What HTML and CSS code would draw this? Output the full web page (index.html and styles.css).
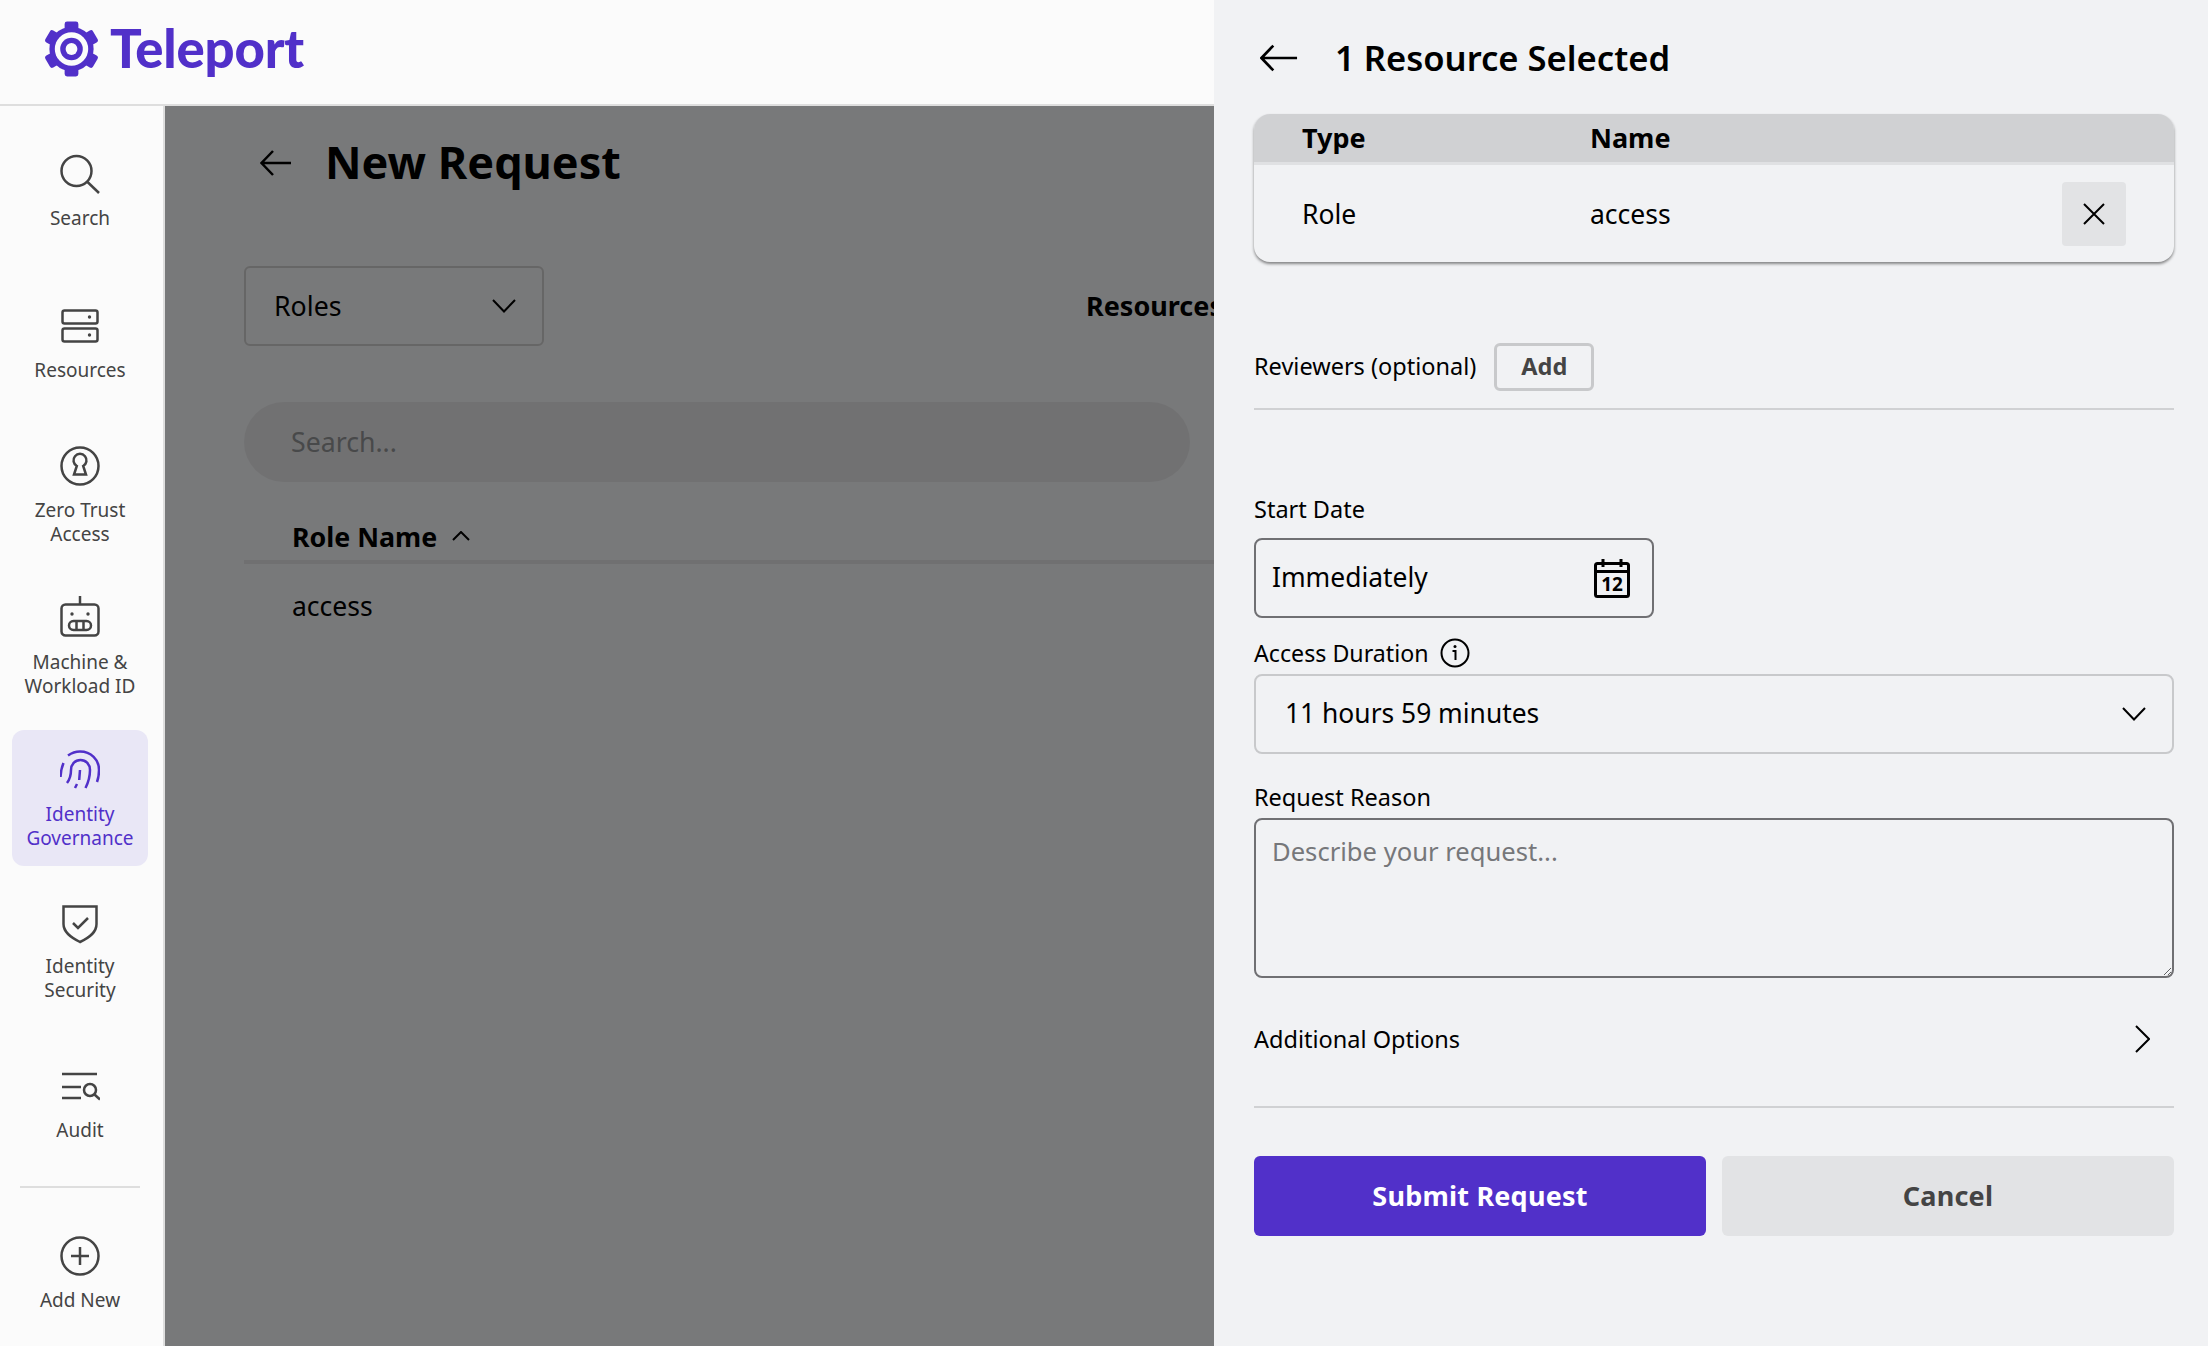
FILE: index.html
```html
<!DOCTYPE html>
<html lang="en">
<head>
<meta charset="utf-8">
<title>Teleport</title>
<link rel="stylesheet" href="styles.css">
</head>
<body>
<div class="app">
  <header class="topbar">
    <svg class="logo-mark" viewBox="0 0 56 56">
      <g class="logo-teeth">
        <rect x="21" y="0" width="14" height="14" rx="2.500"/>
        <rect x="21" y="0" width="14" height="14" rx="2.500" transform="rotate(60 28 28)"/>
        <rect x="21" y="0" width="14" height="14" rx="2.500" transform="rotate(120 28 28)"/>
        <rect x="21" y="0" width="14" height="14" rx="2.500" transform="rotate(180 28 28)"/>
        <rect x="21" y="0" width="14" height="14" rx="2.500" transform="rotate(240 28 28)"/>
        <rect x="21" y="0" width="14" height="14" rx="2.500" transform="rotate(300 28 28)"/>
        <circle cx="28" cy="28" r="22.500"/>
      </g>
      <circle class="logo-hole" cx="28" cy="28" r="17"/>
      <circle class="logo-ring" cx="28" cy="28" r="11.500"/>
      <circle class="logo-hole" cx="28" cy="28" r="6"/>
    </svg>
    <span class="logo-text">Teleport</span>
  </header>
  <div class="body-row">
    <nav class="sidebar">
      <a class="nav-item">
        <svg class="nav-icon" viewBox="0 0 40 40"><circle cx="16.500" cy="17" r="15"/><path d="M27.500 28 39 39"/></svg>
        <span>Search</span>
      </a>
      <a class="nav-item">
        <svg class="nav-icon" viewBox="0 0 40 40"><rect x="2.500" y="4.500" width="35" height="13" rx="2"/><rect x="2.500" y="22.500" width="35" height="13" rx="2"/><circle class="solid" cx="29.500" cy="11" r="1.700"/><circle class="solid" cx="29.500" cy="29" r="1.700"/></svg>
        <span>Resources</span>
      </a>
      <a class="nav-item">
        <svg class="nav-icon" viewBox="0 0 40 40"><circle cx="20" cy="20" r="18.500"/><path d="M14 28.500h12l-2.800-8.500a6.500 6.500 0 1 0-6.400 0z"/></svg>
        <span>Zero Trust<br>Access</span>
      </a>
      <a class="nav-item">
        <svg class="nav-icon icon-bleed" viewBox="0 2 40 40"><rect x="1.500" y="8.500" width="37" height="31" rx="4"/><path d="M20 0v8.500"/><circle class="solid" cx="12" cy="18" r="1.700"/><circle class="solid" cx="28" cy="18" r="1.700"/><rect x="9" y="25" width="22" height="9" rx="4.500"/><path d="M16.500 25v9M23.500 25v9"/></svg>
        <span>Machine &amp;<br>Workload ID</span>
      </a>
      <a class="nav-item active">
        <svg class="nav-icon" viewBox="0 0 40 40"><path d="M0.500 27c.3-5 1-9.500 3-14M8 5.500C11.500 3 15.500 1.500 20 1.500 31 1.500 39 9.500 39 20c0 4-.5 8-2 12"/><path d="M7 33c3-4 4-9 4-13 0-5.500 4-10 9.500-10s9.500 4.500 9.500 10c0 6-1.500 12-4.500 18"/><path d="M20 20l-.8 10M17 34l-2 4"/></svg>
        <span>Identity<br>Governance</span>
      </a>
      <a class="nav-item">
        <svg class="nav-icon icon-bleed" viewBox="0 0 40 40"><path d="M3.500 4.500h33V22c0 8-6 13-16.500 18C10 35 3.500 30 3.500 22z"/><path d="m13 21 5 5 10-10"/></svg>
        <span>Identity<br>Security</span>
      </a>
      <a class="nav-item">
        <svg class="nav-icon" viewBox="0 0 40 40"><path d="M2 8h35M2 21h19M2 32h19"/><circle cx="30" cy="24" r="6"/><path d="m34.500 28.500 5.500 5"/></svg>
        <span>Audit</span>
      </a>
      <div class="nav-divider"></div>
      <a class="nav-item">
        <svg class="nav-icon" viewBox="0 0 40 40"><circle cx="20" cy="20" r="18.500"/><path d="M20 11v18M11 20h18"/></svg>
        <span>Add New</span>
      </a>
    </nav>
    <main class="content">
      <div class="page-head">
        <svg class="back-small" viewBox="0 0 32 28"><path d="M31 14H2M13 2 1.500 14 13 26"/></svg>
        <h1>New Request</h1>
      </div>
      <div class="filter-row">
        <div class="kind-select"><span>Roles</span><svg class="chev" viewBox="0 0 24 14"><path d="M1 1l11 11.500L23 1"/></svg></div>
        <strong class="resources-label">Resources</strong>
      </div>
      <div class="search-pill">Search...</div>
      <div class="table-head"><strong>Role Name</strong><svg class="sort" viewBox="0 0 18 10"><path d="M1 9l8-8 8 8"/></svg></div>
      <div class="table-cell">access</div>
    </main>
  </div>
  <div class="scrim"></div>
  <aside class="panel">
    <div class="panel-head">
      <svg class="back-large" viewBox="0 0 40 30"><path d="M39 15H2M14 2 1.500 15 14 28"/></svg>
      <h2>1 Resource Selected</h2>
    </div>
    <div class="selected">
      <div class="selected-head"><span class="col-type">Type</span><span>Name</span></div>
      <div class="selected-row">
        <span class="col-type">Role</span><span class="col-name">access</span>
        <button class="remove"><svg viewBox="0 0 22 22"><path d="M1 1l20 20M21 1 1 21"/></svg></button>
      </div>
    </div>
    <div class="reviewers"><span>Reviewers (optional)</span><button class="add-btn">Add</button></div>
    <label class="field-label start-label">Start Date</label>
    <div class="date-box">
      <span>Immediately</span>
      <svg class="calendar" viewBox="0 0 36 39"><rect x="1.500" y="4.500" width="33" height="33" rx="2"/><path d="M1.500 12.500h33M9 0v8M27 0v8"/><text x="18" y="32" text-anchor="middle" class="cal-num">12</text></svg>
    </div>
    <label class="field-label duration-label">Access Duration
      <svg class="info" viewBox="0 0 30 30"><circle cx="15" cy="15" r="13.500"/><path d="M12.500 13H15.500V22"/><circle class="solid" cx="15" cy="8.500" r="1.500"/></svg>
    </label>
    <div class="duration-box"><span>11 hours 59 minutes</span><svg class="chev" viewBox="0 0 24 14"><path d="M1 1l11 11.500L23 1"/></svg></div>
    <label class="field-label reason-label">Request Reason</label>
    <textarea class="reason" placeholder="Describe your request..."></textarea>
    <div class="options"><span>Additional Options</span><svg class="chev-right" viewBox="0 0 16 28"><path d="M2 1l13 13L2 27"/></svg></div>
    <div class="actions">
      <button class="btn primary">Submit Request</button>
      <button class="btn secondary">Cancel</button>
    </div>
  </aside>
</div>
</body>
</html>
```

FILE: styles.css
```css
* { box-sizing: border-box; }
html, body { margin: 0; height: 100%; overflow: hidden; }
body { font-family: "Noto Sans", "Open Sans", sans-serif; color: #000; background: #f1f2f4; }
svg { fill: none; stroke: currentColor; flex: none; }
svg .solid { fill: currentColor; stroke: none; }
button { font-family: inherit; cursor: pointer; }

.app { position: relative; width: 2208px; height: 1346px; overflow: hidden; }

.topbar { height: 106px; background: #fbfbfb; border-bottom: 2px solid #dedede; display: flex; align-items: center; padding-left: 44px; gap: 11px; position: relative; z-index: 2; }
.logo-mark { width: 55px; height: 56px; stroke: none; margin-top: -6px; }
.logo-teeth { fill: #5130c9; stroke: none; }
.logo-hole { fill: #fbfbfb; stroke: none; }
.logo-ring { fill: #5130c9; stroke: none; }
.logo-text { font-family: "Lato", sans-serif; font-weight: 900; font-size: 52.700px; line-height: 60px; color: #5130c9; margin-top: -8px; letter-spacing: -0.2px; }

.body-row { display: flex; height: 1240px; }

.sidebar { width: 165px; flex: none; background: #fbfbfb; border-right: 2px solid #dedede; display: flex; flex-direction: column; align-items: flex-start; padding: 16px 0 0 12px; gap: 16px; position: relative; z-index: 2; }
.nav-item { width: 136px; height: 136px; flex: none; border-radius: 12px; padding-top: 4px; display: flex; flex-direction: column; align-items: center; justify-content: center; gap: 12px; color: #444; font-size: 19px; line-height: 24px; text-align: center; white-space: nowrap; }
.nav-icon { width: 40px; height: 40px; stroke-width: 2.500; }
.icon-bleed { overflow: visible; }
.nav-item.active { background: #e9e7f6; color: #5130c9; }
.nav-divider { width: 120px; height: 2px; flex: none; margin-left: 8px; background: #dedede; }

.content { flex: 1; min-width: 0; padding: 25px 0 0 79px; background: #f1f2f4; }
.page-head { display: flex; align-items: center; height: 64px; }
.back-small { width: 32px; height: 28px; margin-left: 16px; stroke-width: 2.500; }
h1 { margin: -2px 0 0 33px; font-size: 45px; line-height: 64px; font-weight: 700; }
.filter-row { display: flex; align-items: center; margin-top: 71px; }
.kind-select { width: 300px; height: 80px; border: 2px solid #ccc; border-radius: 6px; display: flex; align-items: center; justify-content: space-between; padding: 0 26px 0 28px; font-size: 26.700px; line-height: 76px; }
.kind-select span { margin-top: -1px; }
.chev { width: 24px; height: 14px; stroke-width: 2; }
.resources-label { margin: -2px 0 0 542px; font-size: 27px; white-space: nowrap; }
.search-pill { width: 946px; height: 80px; margin-top: 56px; border-radius: 40px; background: #e2e3e5; display: flex; align-items: center; padding: 0 0 2px 47px; font-size: 26.700px; color: #919294; }
.table-head { display: flex; align-items: center; gap: 15px; height: 52px; margin-top: 30px; padding-left: 48px; border-bottom: 4px solid #e0e1e3; font-size: 26.800px; }
.sort { width: 18px; height: 10px; stroke-width: 2; }
.table-cell { padding: 24px 0 0 48px; font-size: 26.500px; line-height: 36px; }

.scrim { position: absolute; left: 165px; top: 106px; right: 0; bottom: 0; background: rgba(0, 0, 0, .5); z-index: 3; }

.panel { position: absolute; top: 0; right: 0; width: 994px; height: 100%; background: #f1f2f4; padding: 0 34px 0 40px; display: flex; flex-direction: column; z-index: 4; }
.panel-head { height: 114px; padding-top: 2px; display: flex; align-items: center; flex: none; }
.back-large { width: 38px; height: 30px; margin-left: 6px; stroke-width: 2.800; }
h2 { margin: 0 0 0 37px; font-size: 34.600px; font-weight: 600; line-height: 48px; }

.selected { flex: none; height: 148px; border-radius: 16px; box-shadow: 0 2px 3px rgba(0, 0, 0, .45); overflow: hidden; font-size: 26.500px; }
.selected-head { height: 51px; padding-bottom: 1px; background: #d0d1d3; border-bottom: 3px solid #e0e1e3; display: flex; align-items: center; font-weight: 700; padding-left: 48px; font-size: 27px; }
.col-type { width: 288px; }
.selected-row { height: 97px; display: flex; align-items: center; padding: 0 48px; }
.col-name { flex: 1; }
.remove { width: 64px; height: 64px; border: 0; border-radius: 4px; background: #e2e3e5; display: flex; align-items: center; justify-content: center; padding: 0; }
.remove svg { width: 22px; height: 22px; stroke-width: 2; color: #000; }

.reviewers { flex: none; margin-top: 81px; padding-bottom: 17px; border-bottom: 2px solid #d0d1d3; display: flex; align-items: center; gap: 18px; font-size: 23.500px; }
.reviewers span { margin-top: -2px; }
.add-btn { width: 100px; height: 48px; border: 3px solid #c8c9cb; border-radius: 6px; background: transparent; color: #444; font-size: 23.500px; font-weight: 700; padding: 0 0 2px; }

.field-label { display: flex; align-items: center; height: 28px; font-size: 23.500px; flex: none; white-space: nowrap; }
.start-label { margin-top: 85px; }
.date-box { flex: none; margin-top: 15px; width: 400px; height: 80px; border: 2px solid #707073; border-radius: 8px; display: flex; align-items: center; justify-content: space-between; padding: 0 22px 2px 16px; font-size: 26.400px; }
.calendar { width: 36px; height: 39px; stroke-width: 3; color: #000; margin-top: 2px; }
.cal-num { font-size: 19px; font-weight: 700; fill: currentColor; stroke: none; }
.duration-label { margin-top: 21px; gap: 11px; font-size: 23.200px; }
.info { width: 30px; height: 30px; stroke-width: 2; }
.duration-box { flex: none; margin-top: 7px; height: 80px; border: 2px solid #c8c9cb; border-radius: 8px; display: flex; align-items: center; justify-content: space-between; padding: 0 26px 2px 29px; font-size: 26.400px; }
.duration-box .chev { margin-top: 2px; }
.reason-label { margin-top: 29px; }
.reason { flex: none; display: block; margin-top: 7px; width: 100%; height: 160px; border: 2px solid #707073; border-radius: 8px; background: transparent; padding: 14px 16px; font-family: inherit; font-size: 25.600px; line-height: 36px; outline: 0; }
.reason::placeholder { color: #76777a; opacity: 1; }
.options { flex: none; margin-top: 41px; height: 40px; display: flex; align-items: center; justify-content: space-between; padding-right: 24px; font-size: 23.500px; }
.chev-right { width: 16px; height: 28px; stroke-width: 2; }
.actions { flex: none; margin-top: 47px; padding-top: 48px; border-top: 2px solid #d0d1d3; display: flex; gap: 16px; }
.btn { flex: 1; height: 80px; border: 0; border-radius: 6px; padding-bottom: 2px; font-size: 27px; font-weight: 700; letter-spacing: .2px; }
.primary { background: #5130c9; color: #fff; }
.secondary { background: #e2e3e5; color: #444; }
```
